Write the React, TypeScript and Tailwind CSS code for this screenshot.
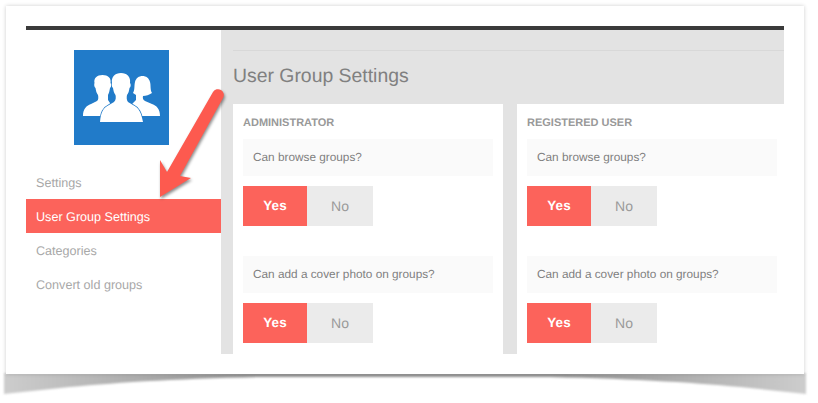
import React from 'react';

const font = "font-['Liberation_Sans',Arial,sans-serif] [text-rendering:geometricPrecision]";

const YesNo = () => (
  <div className="flex h-10 mt-[10px] text-[14px]">
    <div className="w-16 flex items-center justify-center bg-[#fc635b] text-white text-[13.5px] font-bold">Yes</div>
    <div className="w-[66px] flex items-center justify-center bg-[#ebebeb] text-[#999999]">No</div>
  </div>
);

const Question = ({ label }: { label: string }) => (
  <div className="h-[37px] flex items-center pl-[10px] bg-[#fafafa] text-[11.8px] text-[#7f7f7f]">{label}</div>
);

const RoleCard = ({ title, className = '' }: { title: string; className?: string }) => (
  <div className={`bg-white px-[10px] h-[250px] ${className}`}>
    <div className="h-[35px] pt-[12px] text-[11px] leading-[14px] font-bold text-[#999999]">{title}</div>
    <Question label="Can browse groups?" />
    <YesNo />
    <div className="h-[30px]" />
    <Question label="Can add a cover photo on groups?" />
    <YesNo />
  </div>
);

const NavItem = ({ label, active = false }: { label: string; active?: boolean }) => (
  <div className={`h-[34px] flex items-center pl-[10px] pt-[3px] text-[12.6px] ${active ? 'bg-[#fc635b] text-white' : 'text-[#a8a8a8]'}`}>
    {label}
  </div>
);

const GroupLogo = () => (
  <div className="w-[95px] h-[95px] bg-[#217bc9] ml-[48px]">
    <svg width="95" height="95" viewBox="0 0 95 95" fill="#ffffff">
      {/* left person */}
      <path d="M9 66 C9 59 12 56 17 54 L23 51 C24.5 50 24.5 47 24 45 C22.5 43 22 41 21.5 38 C20 37 20 34 20.5 33 C19.5 28 23 25 28.5 25 C34 25 37.5 28 36.5 33 C37.5 34 37.5 37 36 38 C35.5 41 35 43 34 45 L34 50 L38 56 L28 66 Z" />
      {/* right person */}
      <path d="M86 66 C86 59 83 56 78 54 L71 51 C69 50 68.5 48 69 46 C72 46 75 45 78 43 C76 40 77 35 76 32 C75 28 72 26 68.5 26 C65 26 62 28 61 32 C60 36 61 40 59 43 L62 45 L62 50 L56 56 L67 66 Z" />
      {/* middle person */}
      <path
        d="M26 72 C27 62 29 58 35 55 L40 52 C42 50.5 42 47 41.5 45 C40 43 39.5 41 39 38 C37.5 37 37.5 34 38 33 C37 27 41 23 47 23 C53 23 57 27 56 33 C57 34 57 37 55.5 38 C55 41 54.5 43 53 45 C52.5 47 52.5 50.5 54 52 L59 55 C65 58 67 62 69 72 Z"
        stroke="#217bc9"
        strokeWidth="1.5"
        paintOrder="stroke"
      />
    </svg>
  </div>
);

export default function App() {
  return (
    <div className={`relative w-[818px] h-[403px] overflow-hidden bg-white pl-[6px] pt-[6px] ${font}`}>
      {/* curled page shadow */}
      <svg className="absolute left-0 top-[370px] blur-[1px]" width="818" height="33" viewBox="0 0 818 33">
        <defs>
          <linearGradient id="curlShadow" x1="0" y1="0" x2="1" y2="0">
            <stop offset="0" stopColor="#cdcdcd" />
            <stop offset="0.15" stopColor="#b0b0b0" />
            <stop offset="0.3" stopColor="#939393" />
            <stop offset="0.7" stopColor="#939393" />
            <stop offset="0.85" stopColor="#b0b0b0" />
            <stop offset="1" stopColor="#cdcdcd" />
          </linearGradient>
        </defs>
        <path d="M4 3 L806 3 L806 24 L750 18 C700 13 640 9 550 7 L260 7 C170 9 110 13 60 18 L4 24 Z" fill="url(#curlShadow)" />
      </svg>

      <div className="relative w-[798px] h-[368px] bg-white p-5 shadow-[0_0_4px_rgba(0,0,0,0.2)]">
        <div className="h-1 bg-[#3a3a3a]" />
        <div className="flex h-[324px]">
          <div className="w-[195px]">
            <div className="pt-5 h-[135px]">
              <GroupLogo />
            </div>
            <NavItem label="Settings" />
            <NavItem label="User Group Settings" active />
            <NavItem label="Categories" />
            <NavItem label="Convert old groups" />
          </div>
          <div className="flex-1 bg-[#e3e3e3] pl-3 pt-5">
            <div className="h-[54px] border-t border-[#d8d8d8] pt-[13px] text-[19.4px] leading-6 text-[#808080]">User Group Settings</div>
            <div className="flex gap-[14px]">
              <RoleCard title="ADMINISTRATOR" className="w-[270px]" />
              <RoleCard title="REGISTERED USER" className="w-[267px] !pr-[7px]" />
            </div>
          </div>
        </div>
      </div>

      {/* annotation arrow */}
      <svg className="absolute left-[150px] top-[80px]" width="85" height="125" viewBox="0 0 85 125">
        <path
          d="M63 12 A5.8 5.8 0 0 1 73 18 L30 96 L41 98 L10 117 L10 80 L17 92 Z"
          fill="#fd5a4f"
          style={{ filter: 'drop-shadow(1px 2px 1.5px rgba(0,0,0,0.45))' }}
        />
      </svg>
    </div>
  );
}
